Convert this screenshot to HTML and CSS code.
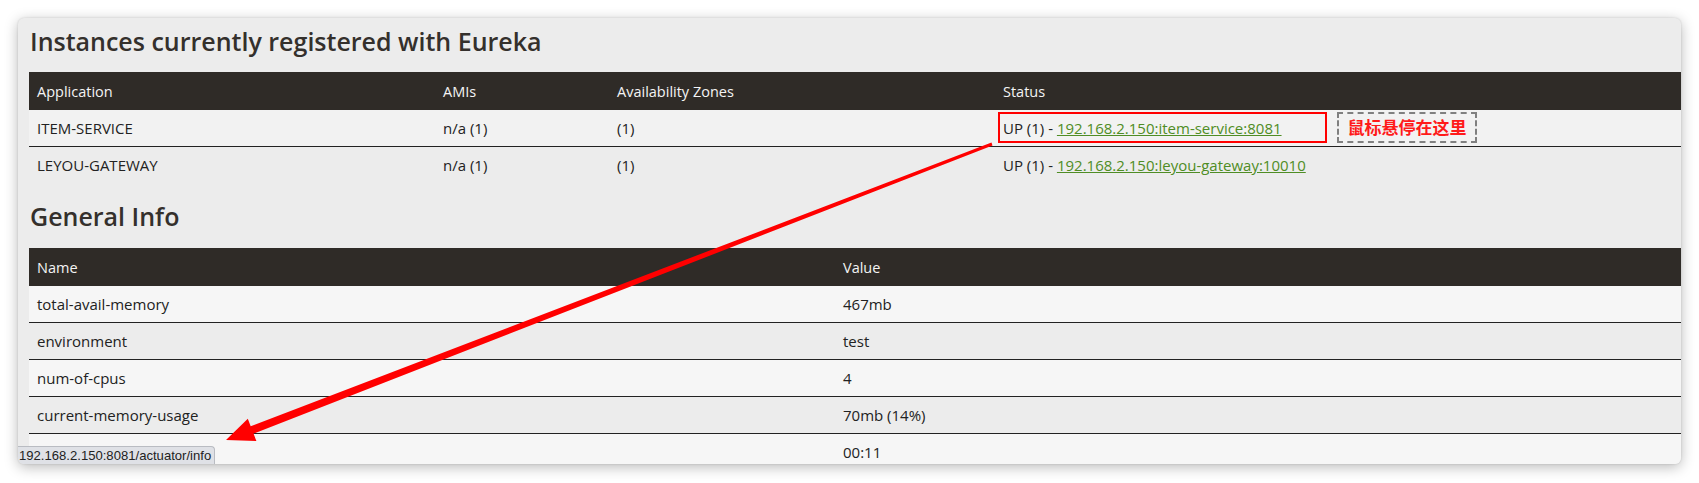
FILE: index.html
```html
<!DOCTYPE html>
<html>
<head>
<meta charset="utf-8">
<link rel="stylesheet" href="styles.css">
</head>
<body>
<div class="window">
  <h2 class="title">Instances currently registered with Eureka</h2>
  <table class="tbl apps">
    <colgroup><col class="c1"><col class="c2"><col class="c3"><col></colgroup>
    <thead>
      <tr><th>Application</th><th>AMIs</th><th>Availability Zones</th><th>Status</th></tr>
    </thead>
    <tbody>
      <tr class="light"><td>ITEM-SERVICE</td><td>n/a (1)</td><td>(1)</td><td>UP (1) - <a href="#">192.168.2.150:item-service:8081</a></td></tr>
      <tr class="dark"><td>LEYOU-GATEWAY</td><td>n/a (1)</td><td>(1)</td><td>UP (1) - <a href="#">192.168.2.150:leyou-gateway:10010</a></td></tr>
    </tbody>
  </table>
  <h2 class="title second">General Info</h2>
  <table class="tbl info">
    <colgroup><col class="n1"><col></colgroup>
    <thead>
      <tr><th>Name</th><th>Value</th></tr>
    </thead>
    <tbody>
      <tr class="lighter"><td>total-avail-memory</td><td>467mb</td></tr>
      <tr class="dark"><td>environment</td><td>test</td></tr>
      <tr class="lighter"><td>num-of-cpus</td><td>4</td></tr>
      <tr class="dark"><td>current-memory-usage</td><td>70mb (14%)</td></tr>
      <tr class="lighter"><td>server-uptime</td><td>00:11</td></tr>
    </tbody>
  </table>

  <div class="redbox"></div>
  <div class="note">鼠标悬停在这里</div>
  <div class="statusbar">192.168.2.150:8081/actuator/info</div>
  <svg class="arrow" width="1663" height="446" viewBox="18 18 1663 446" xmlns="http://www.w3.org/2000/svg">
    <polygon fill="#ff0000" points="992.5,145.4 253.5,433.6 256.4,441.1 226,440 247.8,418.7 250.7,426.2 991.5,142.6"/>
  </svg>
</div>
</body>
</html>
```
FILE: styles.css
```css
html, body {
  margin: 0;
  padding: 0;
  background: #ffffff;
}
body {
  padding: 18px 18px 0 18px;
  width: 1663px;
  height: 465px;
  overflow: hidden;
}
.window {
  position: relative;
  width: 1663px;
  height: 446px;
  background: #ececec;
  border-radius: 6px;
  box-shadow: 0 3px 14px rgba(0, 0, 0, 0.28), 0 0 2px rgba(0, 0, 0, 0.15);
  overflow: hidden;
  padding: 8px 0 0 11px;
  box-sizing: border-box;
  font-family: "Open Sans", "Noto Sans", sans-serif;
  color: #222222;
}
.title {
  margin: 0 0 16px 1px;
  font-size: 25px;
  line-height: 30px;
  font-weight: 600;
  color: #34302c;
  letter-spacing: 0;
  font-family: "Open Sans", sans-serif;
}
.title.second {
  margin-top: 18px;
  margin-bottom: 17px;
}
.tbl {
  border-collapse: collapse;
  width: 1652px;
  table-layout: fixed;
  font-size: 15px;
}
.tbl th {
  background: #2f2b27;
  color: #f4f4f4;
  font-weight: 400;
  text-align: left;
  height: 38px;
  padding: 0 8px;
  font-size: 14.5px;
}
.tbl td {
  height: 36px;
  padding: 0 8px;
  color: #222;
}
.tbl tr + tr td {
  border-top: 1px solid #222;
}
.apps .c1 { width: 406px; }
.apps .c2 { width: 174px; }
.apps .c3 { width: 386px; }
.info .n1 { width: 806px; }
tr.light td { background: #f2f2f2; }
tr.lighter td { background: #f6f6f6; }
tr.dark td { background: #ececec; }
.tbl a {
  color: #4f8d25;
  text-decoration: underline;
}
.redbox {
  position: absolute;
  left: 980px;
  top: 94px;
  width: 325px;
  height: 27px;
  border: 2px solid #ff0000;
}
.note {
  position: absolute;
  left: 1319px;
  top: 94px;
  width: 136px;
  height: 27px;
  border: 2px dashed #808080;
  color: #ff1a1a;
  font-family: "Noto Sans CJK SC", sans-serif;
  font-weight: 700;
  font-size: 17px;
  line-height: 26px;
  text-align: center;
}
.statusbar {
  position: absolute;
  left: 0;
  bottom: 0;
  height: 17px;
  padding: 0 3px 0 1px;
  background: #dfe1e6;
  border-top: 1px solid #b9bcc2;
  border-right: 1px solid #b9bcc2;
  border-top-right-radius: 4px;
  font-family: "Liberation Sans", sans-serif;
  font-size: 13.1px;
  line-height: 17px;
  color: #222;
}
.arrow {
  position: absolute;
  left: 0;
  top: 0;
  pointer-events: none;
}
```
